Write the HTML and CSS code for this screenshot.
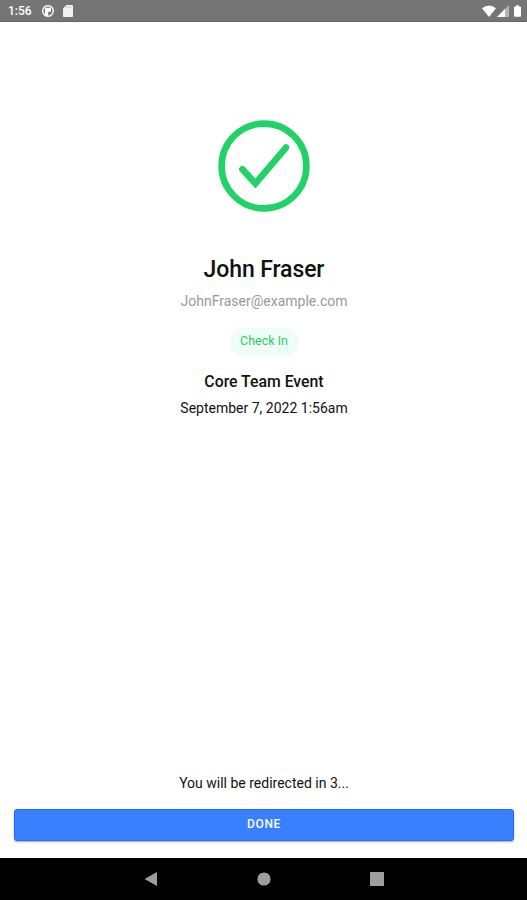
FILE: index.html
```html
<!DOCTYPE html>
<html lang="en">
<head>
    <meta charset="UTF-8">
    <meta name="viewport" content="width=device-width, initial-scale=1.0">
    <title>Check In</title>
    <link rel="stylesheet" href="styles.css">
</head>
<body>
    <header class="status-bar">
        <span class="clock">1:56</span>
        <svg class="status-app" width="12" height="12" viewBox="0 0 12 12">
            <circle cx="6" cy="6" r="5.3" fill="none" stroke="#fff" stroke-width="1.4"/>
            <path d="M3 2.8h6v4H6.2v4H3z" fill="#fff"/>
        </svg>
        <svg class="status-card" width="10" height="12" viewBox="0 0 10 12">
            <path d="M3.4 0H9q1 0 1 1v10q0 1-1 1H1q-1 0-1-1V3.6z" fill="#f2f2f2"/>
            <path d="M3.8 1.3v1.6M5.8 1.3v1.6M7.8 1.3v1.6" stroke="#aaa" stroke-width=".7"/>
        </svg>
        <div class="status-right">
            <svg width="14" height="12" viewBox="0 0 14 12">
                <path d="M0 3.2Q7-2.2 14 3.2L7 12z" fill="#fff"/>
            </svg>
            <svg width="12" height="12" viewBox="0 0 12 12">
                <path d="M12 0v12H0z" fill="#b5b5b5"/>
                <path d="M8 4v8H0z" fill="#fff"/>
            </svg>
            <svg class="battery" width="7" height="12" viewBox="0 0 8 13">
                <path d="M2.4 0h3.2v1.4H7q1 0 1 1V12q0 1-1 1H1q-1 0-1-1V2.4q0-1 1-1h1.4z" fill="#fff"/>
            </svg>
        </div>
    </header>

    <main class="content">
        <svg class="check" width="92" height="92" viewBox="0 0 92 92" fill="none" stroke="#21d267" stroke-width="6.6">
            <circle cx="46" cy="46" r="42.4"/>
            <path d="M24.4 49.2L37.4 63.5L68 27.6" stroke-linecap="round"/>
        </svg>
        <h1 class="name">John Fraser</h1>
        <p class="email">JohnFraser@example.com</p>
        <div class="chip">Check In</div>
        <h2 class="event">Core Team Event</h2>
        <p class="date">September 7, 2022 1:56am</p>
    </main>

    <footer class="footer">
        <p class="redirect">You will be redirected in 3...</p>
        <button class="done" type="button">DONE</button>
    </footer>

    <nav class="nav-bar">
        <svg width="14" height="16" viewBox="0 0 14 16"><path d="M13 1v14L.5 8z" fill="#9e9e9e"/></svg>
        <svg width="14" height="14" viewBox="0 0 14 14"><circle cx="7" cy="7" r="6.6" fill="#9e9e9e"/></svg>
        <svg width="14" height="14" viewBox="0 0 14 14"><path d="M0 0h14v14H0z" fill="#9e9e9e"/></svg>
    </nav>
</body>
</html>
```

FILE: styles.css
```css
* {
    box-sizing: border-box;
}
body {
    display: flex;
    flex-direction: column;
    height: 100vh;
    margin: 0;
    font-family: Roboto, sans-serif;
    background-color: #fff;
    color: #111;
}
h1, h2, p {
    margin: 0;
}
svg {
    display: block;
    flex: none;
}
.status-bar {
    display: flex;
    align-items: center;
    height: 22px;
    padding: 0 6px 0 8px;
    background-color: #757575;
    border-bottom: 1px solid #686868;
    color: #fff;
}
.clock {
    width: 34px;
    font-size: 12px;
    font-weight: 500;
}
.status-card {
    margin-left: 9px;
}
.status-right {
    display: flex;
    align-items: center;
    gap: 1px;
    margin-left: auto;
}
.battery {
    margin-left: 4px;
}
.content {
    display: flex;
    flex: 1;
    flex-direction: column;
    align-items: center;
    padding: 98px 0 0 1px;
}
.name {
    margin-top: 44px;
    font-size: 23px;
    font-weight: 500;
    line-height: 28px;
    letter-spacing: -0.1px;
}
.email {
    margin-top: 8px;
    font-size: 14px;
    line-height: 18px;
    color: #999;
}
.chip {
    width: 69px;
    height: 28px;
    margin-top: 18px;
    border-radius: 14px;
    background-color: #effef5;
    font-size: 12.5px;
    line-height: 26px;
    text-align: center;
    color: #2dcb6d;
}
.event {
    margin-top: 16px;
    font-size: 15.8px;
    font-weight: 500;
    line-height: 20px;
}
.date {
    margin-top: 7px;
    font-size: 14px;
    line-height: 18px;
}
.footer {
    padding: 0 13px 17px 14px;
    text-align: center;
}
.redirect {
    margin-bottom: 17px;
    font-size: 14px;
    line-height: 18px;
}
.done {
    display: block;
    width: 100%;
    height: 32px;
    padding: 0 0 2px;
    border: 1px solid #1c70ee;
    border-radius: 3px;
    background-color: #3880ff;
    box-shadow: 0 1px 2px rgba(0, 0, 0, 0.35);
    font-family: inherit;
    font-size: 12px;
    font-weight: 500;
    letter-spacing: 0.6px;
    color: #fff;
}
.nav-bar {
    display: flex;
    align-items: center;
    justify-content: center;
    gap: 99px;
    height: 42px;
    background-color: #000;
}
```
